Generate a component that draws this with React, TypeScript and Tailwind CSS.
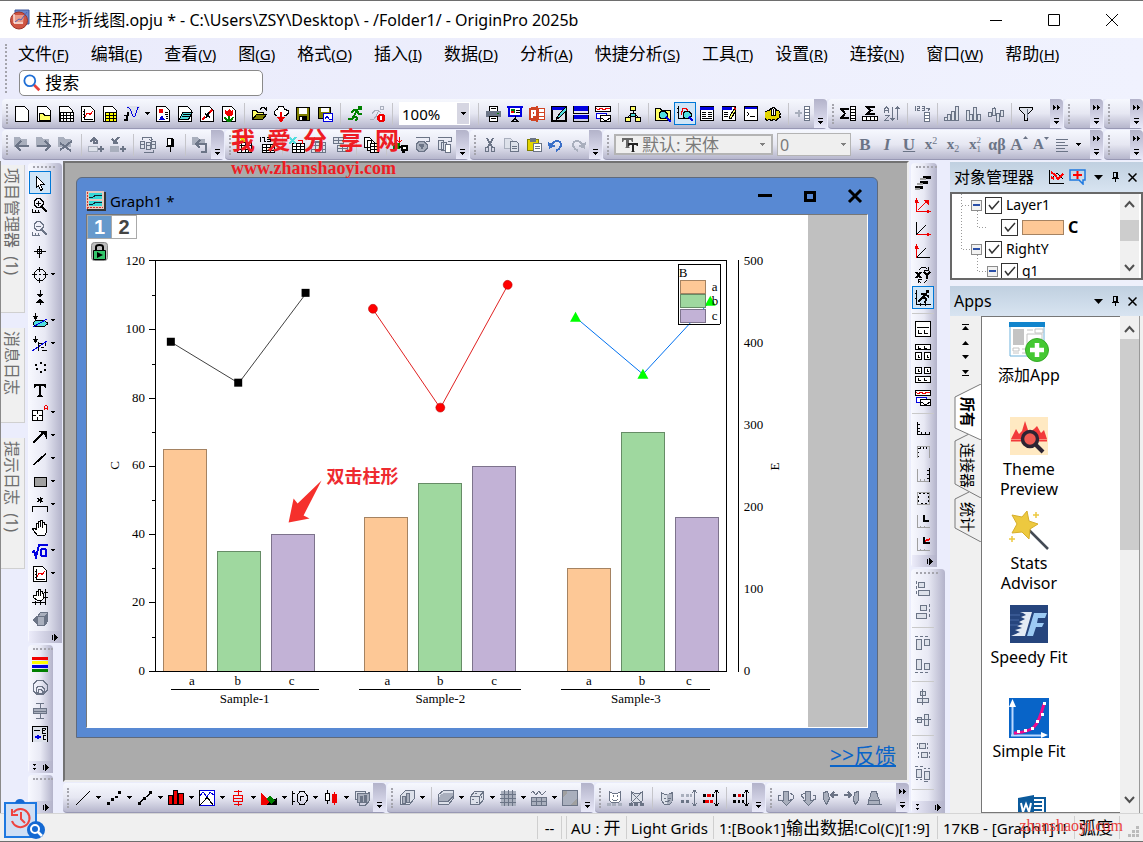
import React from "react";

const COLORS: Record<string, string> = {
  k: "#000000", g: "#6b7486", l: "#a9afbd", s: "#dde1ea", w: "#ffffff", r: "#f00000", m: "#e2d400",
  b: "#0000e0", y: "#ffff66", n: "#008000", c: "#4fdede", o: "#a0a0a0", d: "#808000", p: "#d04423", t: "#3a6fc8", v: "#ffff00",
};

const PAGE = "k/w/M1.5.5h9l4 4v11h-13z";
const GRID = "M.5 5.5h14v10h-14zM.5 8.5h14M.5 12.5h14M4.5 5.5v10M8.5 5.5v10M11.5 5.5v10";
const CUBE = "M1.5 6.5l4-5h9v8l-4 5h-9zM1.5 6.5h9v8M10.5 6.5l4-5";

/* Each entry is "stroke[width]/fill/path" on a 16x16 grid. */
const ICONS: Record<string, string[]> = {
  newProject: [PAGE],
  newFolder: [PAGE, "k/y/M3.5 7.5h4l1 2h6v5h-11z"],
  newWorkbook: [PAGE, "k/w/M2.5 6.5h13v9h-13zM2.5 9.5h13M2.5 12.5h13M5.5 6.5v9M8.5 6.5v9M12.5 6.5v9"],
  newGraph: [PAGE, "k/-/M4.5 3v10h8M4 5.5h-1M4 8.5h-1M4 11.5h-1M7.5 14v-1M10.5 14v-1", "r/-/M5 11l2-4h2l1 2 3-4"],
  newMatrix: [PAGE, "k/v/M3.5 6.5h11v9h-11zM3.5 9.5h11M3.5 12.5h11M7.5 6.5v9M11.5 6.5v9"],
  newFunction: ["-/s/M3 0h13v13h-13z", "b/-/M3 2l1-1 2 2 3 7h2l3-9 1 0", "k2/-/M5 7h-1l-1 7h-3", "k/-/M0 9.5h5"],
  newLayout: [PAGE, "-/r/M4 3h4v4h-4z", "-/b/M4 14l3-5 3 5z", "k/-/M10 6.5h3M10 8.5h3M11 10.5h2M11 12.5h2"],
  newNotes: [PAGE, "k/c/M5.5 6.5h10l-4 7h-9zM5.5 8.5h8M4.5 10.5h8"],
  newWindow: [PAGE, "r2/-/M3 14l3-3M8 9l5-5", "k2/-/M6 8l5 3M10 6l-3 6"],
  newImage: [PAGE, "-/r/M4 4l2 1 2-2 2 2 2-1v4l-2 2h-4l-2-2z", "n2/-/M8 10v5M4 11q1 4 4 4M12 11q-1 4-4 4"],
  open: ["k/y/M1.5 12.5v-8h4l1 2h6v3", "k/d/M1.5 13.5l4-5h10l-4 5z", "k/-/M9 3.5l2-2h2l2 2M15.5 1v4"],
  openCloud: ["k/w/M4 9.5h-1l-2-2v-2l3-2 2-3h4l2 3 3 1v3l-2 2h-2", "r2/-/M8 6v9M5 11l3 4 3-4"],
  save: ["k/d/M1.5 1.5h13v13h-12l-1-1z", "-/w/M4 2h8v6h-8z", "-/k/M4 10h8v5h-8z", "-/w/M5 11h2v3h-2z"],
  saveAs: ["k/d/M1.5 1.5h12v11h-12z", "-/w/M4 2h8v4h-8z", "b/w/M6.5 7.5h9v8h-9z", "b/-/M8 13l2-3 2 3h3"],
  run: ["n2/-/M4 7l3-3h3l-3 6 3 2-1 3M7 10l-2 3H1M10 5l2 3h3", "-/n/M11 0h4v4h-4z"],
  stop: ["l/-/M3 7l3-3h4l-3 6 2 2M7 10l-2 3H1M3 8l3-3M10 5l2 2M11 .5h3v3h-3z", "-/r/M10 8h4l2 2v4l-2 2h-4l-2-2v-4z", "w2/-/M12 10v4"],
  print: ["k/w/M4.5 5V.5h8V5", "-/g/M1 5h15v6H1z", "k/w/M4.5 10.5h8v5h-8zM6 2.5h5M6 12.5h5", "-/n/M12 7h2v1h-2z"],
  slideShow: ["b2/w/M2 1v9h12v-9M0 1h16", "-/n/M4 3h4v4h-4z", "-/r/M4 5h3v2h-3z", "k/-/M9 4.5h4M9 6.5h4M8 10v3M5 15.5l3-3 3 3z"],
  sendToPpt: ["-/p/M0 2l9-2v16l-9-2z", "p/w/M9.5 2.5h6v11h-6zM10 6.5h5M10 10.5h5", "w2/-/M3 12V5h3v4h-3"],
  drawing: ["k2/s/M1 1h14v14h-14z", "-/b/M1 1h14v3h-14z", "k/c/M5 13l4-6 6-6v4l-5 5-5 4z"],
  split: ["-/b/M0 0h16v5h-16zM0 9h16v4h-16z", "k/-/M.5 0v7h15V0M.5 9v6.5h15V9"],
  arrange: ["k/w/M.5.5h15v5H.5z", "r/-/M1 2l2 2 3-2 3 2 3-2 3 1", "b/w/M1.5 7.5h10v5h-10z", "k/w/M5.5 9.5h10v6h-10z", "k/-/M6 12l5 3 4-3"],
  tree: ["k/y/M5.5.5h5v4h-5zM.5 11.5h5v4h-5zM10.5 11.5h5v4h-5z", "k/-/M8 5v3M3 11l5-4 5 4", "k/c/M5.5 7.5h5v3h-5z"],
  findFolder: ["k/y/M.5 2.5h5l1 2h9v10H.5z", "k/c/M6 5.5h4l2 2v3l-2 2H6l-2-2v-3z", "b2/-/M11 11l5 5"],
  findGraph: ["k/-/M1.5 0v12h6M0 2.5h2M0 6.5h2M4.5 13v-1", "r/-/M4 9l2-7h3l2 3", "k/c/M8 5.5h4l2 2v3l-2 2H8l-2-2v-3z", "b2/-/M12 11l4 4"],
  results: ["k/w/M1.5.5h13v14h-13z", "-/b/M1 1h14v3h-14z", "k/-/M3 6.5h4M9 6.5h4M3 8.5h4M9 8.5h4M3 10.5h4M9 10.5h4M3 12.5h10"],
  editCode: ["k/w/M1.5.5h13v14h-13z", "-/b/M1 1h10v3h-10z", "k/-/M3 6.5h4M3 8.5h4M3 10.5h4", "k/y/M8 12l5-9 2 1-5 9z", "r2/-/M13 2l2 1"],
  command: ["k/w/M1.5.5h13v14h-13z", "-/b/M2 1h12v2h-12z", "k/-/M4 6l2 2-2 2M7 10.5h5"],
  gear: ["k/m/M2.5 4.5h2l1-2h5l1 2h2l2 3-1 2 1 2-3 1-1 2-3-1-2 1-2-1-3 1-1-2-3-1 1-2-1-2z", "k/w/M6.5 3.5l1-2h2l1 2v6h-4zM8.5 3v6"],
  addColumn: ["l2/-/M0 7h7M3.5 3.5v7", "g/w/M9.5.5h5v14h-5zM10 3.5h4M10 6.5h4M10 9.5h4M10 12.5h4"],
  stats: ["k2/-/M8 4V3H1l4 4.5L1 12h7v-1", "k/w/M10.5.5h5v14h-5zM11 3.5h4M11 6.5h4M11 9.5h4M11 12.5h4"],
  rowStats: ["k2/-/M12 2V1H5l4 3.5L5 8h7V7", "k/w/M.5 10.5h15v4H.5zM4.5 11v3M8.5 11v3M12.5 11v3"],
  sort: ["g/-/M.5 7V3l2-2 2 2v4M1 4.5h3M1 9.5h4l-4 5h4M8.5 1v13M6.5 12l2 2 2-2M13.5 14V1M11.5 3l2-2 2 2"],
  insertNumbers: ["g/-/M1.5 0v5M3 .5h2v2h-2v2h3M8 .5h2v4h-2M8 2.5h2M12 2.5h4l-2 2", "g/w/M10.5 6.5h5v9h-5zM11 9.5h4M11 12.5h4"],
  barsUp: ["g/s/M.5 11.5h3v3h-3zM3.5 8.5h3v6h-3zM7.5 5.5h3v9h-3zM11.5.5h3v14h-3z"],
  barsHist: ["g/s/M.5 4.5h3v10h-3zM3.5 8.5h3v6h-3zM7.5 1.5h3v13h-3zM11.5 8.5h3v6h-3z"],
  barsDiff: ["g/s/M.5 6.5h3v4h-3zM4.5 2.5h3v7h-3zM8.5 7.5h3v8h-3zM12.5 4.5h3v6h-3zM6.5.5v2"],
  filter: ["k/s/M1.5 1.5h13v2l-5 5v6h-3v-6l-5-5z", "g/-/M9 3v9"],
  back: ["-/l/M0 0h6l1 2h6v8H0z", "g2/-/M15 9H2M7 4L2 9l5 5"],
  forward: ["-/l/M0 0h6l1 2h6v8H0z", "g2/-/M1 9h13M9 4l5 5-5 5"],
  closeFolder: ["-/l/M0 0h6l1 2h6v8H0z", "g2/-/M2 13L14 4M2 6l11 8"],
  moveUp: ["g2/-/M2 5l4-4 4 4M6 1v5h4", "l/s/M.5 9.5h9v5h-9z", "g2/-/M10 12h6M13 9v6"],
  moveDown: ["g2/-/M2 2l4 4M3 6h5M9 0L6 3v3", "-/l/M0 9h9v6H0z", "g2/-/M10 12h6M13 9v6"],
  windows: ["g/-/M2 2.5V.5h9v2M4 15.5h9v-3M9 2l2 2 2-2", "g/s/M.5 4.5h4v7h-4zM6.5 5.5h4v7h-4zM11.5 4.5h4v7h-4zM0 7.5h4M6 8.5h4M11 7.5h4"],
  pin: ["k/w/M5.5 1.5h5v7h-5z", "k/k/M9 2h2v7H9zM4 9.5h8M8 10v5"],
  undoFolder: ["-/l/M0 0h6l1 2h6v6H0z", "g2/-/M9 15h5V7H5M8 3L4 7l4 4"],
  gridNew: ["k/w/" + GRID, "m2/-/M3 0l5 5M8 0L3 5"],
  grid123: ["k/-/M1.5 0v5M3 .5h2v4h2M8 .5h3v4H8M8 2.5h3", "k/w/M3.5 7.5h12v8h-12zM3.5 10.5h12M3.5 13.5h12M7.5 7.5v8M11.5 7.5v8"],
  gridExcel: ["k/w/M3.5 6.5h12v9h-12zM3.5 9.5h12M3.5 12.5h12M7.5 6.5v9M11.5 6.5v9", "c2/-/M0 0l7 7M7 0L0 7", "r/-/M9 3.5h4v3"],
  gridDim: ["g/s/" + GRID, "g/-/M3 0v4h8"],
  gridDim2: ["g/s/M.5.5h10v6H.5zM.5 3.5h10M5.5.5v6M4.5 8.5h10v6h-10zM4.5 11.5h10M9.5 8.5v6"],
  copies: ["k/w/M1.5.5h5l2 2v8h-7zM4.5 3.5h5l2 2v8h-7z", "k/w/M7.5 6.5h8v9h-8zM7.5 9.5h8M7.5 12.5h8M11.5 6.5v9"],
  plug: ["n2/n/M1 7h5v4H1z", "k2/w/M9 9h5v4H9zM6 10h3M9 15h3", "r/-/M6.5 0v5M4 3l2.5 2L9 3"],
  disc: ["g/-/M1 .5h13v4M11 4.5h4", "g/l/M4 4.5h5l3 3v4l-3 3H4l-3-3v-4z", "g/g/M4 7h5l-2 5z"],
  copyPages: ["g/-/M1 .5h13v4M11 4.5h4", "g/s/M1.5 3.5h5v9h-5zM4.5 5.5h5v8h-5z", "g/w/M8.5 7.5h5v8h-5z"],
  cut: ["g/-/M4.5 1l5 9M5.5 1l5 9M11.5 1l-5 9M10.5 1l-5 9", "g/-/M3.5 10.5h3v4h-3zM9.5 10.5h3v4h-3z"],
  copy: ["l/s/M.5 1.5h6l2 2v8h-8z", "g/s/M6.5 4.5h6l2 2v8h-8zM8 9.5h5M8 11.5h5"],
  paste: ["d/m/M1.5 2.5h11v11h-11z", "-/g/M4 1h6v4H4z", "g/w/M7.5 6.5h8v8h-8zM9 9.5h5M9 11.5h5"],
  undo: ["t2/-/M4 7q4-5 8-2q3 5-4 9", "-/t/M0 5l8 4-7 3z"],
  redo: ["l2/-/M12 7q-4-5-8-2q-3 5 4 9", "-/l/M16 5l-8 4 7 3z"],
  align: ["g/-/M1 2.5h12M1 5.5h9M1 8.5h12M1 11.5h9M1 14.5h12"],
  pointer: ["k/w/M4.5 1.5l8 8h-4l2 5-2 1-2-5-2 2v-11z"],
  zoomIn: ["k/-/M5 .5h3l3 3v3l-3 3H5l-3-3v-3zM4 5h5M6.5 2.5v5M.5 11v4M0 14.5h8M3.5 12v3M6.5 12v3", "k2/-/M10 9l5 5"],
  zoomOut: ["g/-/M5 .5h3l3 3v3l-3 3H5l-3-3v-3zM4 5h5M.5 11v4M0 14.5h8M3.5 12v3M6.5 12v3", "g2/-/M10 9l5 5"],
  reader: ["k/-/M2 7.500h12M7.500 2v12M5.500 5.500h4v4h-4z"],
  target: ["k/-/M5.500 2.500h5l3 3v5l-3 3h-5l-3-3v-5zM0 7.500h5M11 7.500h5M7.500 0v5M7.500 11v5M7 7.500h2"],
  selector: ["k/k/M8 0v5M5 4h6l-3 3zM8 15v-4M5 12h6l-3-3z"],
  region: ["k/c/M4 7.5h8l3 2v2l-3 2H4l-3-2v-2z", "b/-/M1 14L15 6", "k/k/M3.5 0v4M1 3h5l-2.5 3z"],
  maskLine: ["b/-/M0 15L15 5", "k/-/M6.5 6v9M6 7.5h4M9 11.5h3M13.5 7v3M10 14.500h5", "k/k/M3.5 0v4M1 3h5l-2.5 3z"],
  scatter: ["-/k/M3 5h2v2H3zM8 3h2v2H8zM12 5h2v2h-2zM4 9h2v2H4zM8 12h2v2H8zM12 10h2v2h-2z"],
  text: ["-/k/M2 2h12v4h-1l-1-2H9v9l2 1v1H5v-1l2-1V4H4L3 6H2z"],
  annotate: ["k/w/M.5 5.5h10v10H.5zM.5 10.5h3M7 10.5h3M5.5 5.5v3M5.5 12v3", "r/-/M12.5 5V1.5L14 .5l1.500 1V5M12.500 3.500h3"],
  arrow: ["k2/-/M1 15L11 5", "-/k/M6 3h9v9l-2-4-3-3z"],
  line: ["k/-/M1 14L14 2M2 14L14 3"],
  rect: ["k/o/M2.500 3.500h12v9h-12z"],
  bracket: ["k/-/M.500 15V9.500h15V15", "k/-/M8 0v6M5 1l6 4M5 5l6-4"],
  hand: ["k/w/M5.5 15.5l-4-5-1-2h2l2 1v-6h2v-2h2v-1h2v2h2v2h2v8l-2 3zM6.500 3v5M8.500 2v5M10.500 3v5"],
  formula: ["b2/-/M0 9l2-1 2 6L7 2h9M14 6h-4l-1 1v5l1 1h4M14 6v8"],
  handAxis: ["k/w/M5.500 11.500l-4-3v-2h3v-4h2v-2h2v2h2v2h1v5l-2 2zM6.500 3v4M8.500 3v4", "k/-/M0 13.500h13M13.500 0v16M3.500 12v4M8.500 12v4M12 3.500h4M12 8.500h4"],
  box3d: ["g/l/M5.500 4.500l3-4h7v9l-3 4h-7z", "-/g/M12 4l3-3v9l-3 3z", "g/-/M5.500 4.500h7v9", "-/g/M0 8l5-4v8z"],
  palette: ["-/r/M0 0h16v3H0z", "-/v/M0 4h16v3H0z", "-/b/M0 8h16v3H0z", "-/n/M0 12h16v3H0z"],
  circles: ["g/-/M5 .500h6l4 4v6l-4 4H5l-4-4v-6zM6 6.500h4l2 2v3l-2 2H6l-2-2v-3zM7 9.500h2l1 1v3H6v-3z"],
  boxGray: ["g/l/M1.500 5.500h13v5h-13zM1.500 8h13M8 0v5M8 11v4M4 .500h8M4 15.500h8"],
  legend: ["k/s/M.500 15.500V.500h15v15", "k/-/M2 4.500h6M10.500 2v5h3M10 4.500h3M10.500 2.500h3M13.500 3v1M14 9.500h-3v4h3", "b2/-/M3 11h6M6 9v4"],
  layers: ["k3/-/M8 2h8M5 7h8M0 12h8", "o2/-/M5 4h6M2 9h6M0 14h5"],
  axesRed: ["r/r/M1.500 14V2M0 4l1.500-3L3 4zM12 12l3 1.500L12 15zM2 13.500h12M3 12l9-9M9 2h4v4z"],
  axesX: ["k/-/M1.500 14V1M2 13l9-9", "r/r/M2 13.500h12M12 12l3 1.500L12 15z"],
  axesY: ["k/-/M2 13.500h13M2 13l9-9", "r/r/M1.500 14V2M0 4l1.500-3L3 4z"],
  swapXY: ["k2/-/M1 5l5 6M6 5l-5 6M9 5l3 3 3-3M12 8v4", "k/-/M4 3l3-3h3l2 2M13 0v3H9M12 13l-3 3H6l-2-2M3 16v-4h4"],
  runGraph: ["k/-/M1.500 0v14.500H16M0 3.500h2M0 8.500h2M5.500 13v3M10.500 13v3", "k2/-/M11 3L8 7l3 2-1 4M8 7l-5 5M6 4h4l4 3", "-/k/M11 0h3v3h-3z"],
  layoutOne: ["k/w/M.500.500h15v15H.500z", "k/-/M2 6.500h12M3.500 9v3.500H7M9.500 9v3.500H13"],
  layoutTwo: ["k/w/M.500.500h15v5H.500zM.500 8.500h6v7h-6zM9.500 8.500h6v7h-6z", "k/-/M3.500 2v2H6M9.500 2v2H12M3 11v2h2M12 11v2h2"],
  layoutFour: ["k/w/M.500.500h6v6h-6zM9.500.500h6v6h-6zM.500 9.500h15v6H.500z", "k/-/M3 2v2h2M12 2v2h2M3.500 11v2H6M9.500 11v2H12"],
  cornerL: ["k/-/M2.500 1v12.500H15M2 3.500h3M2 7.500h3M2 10.500h3M6.500 14v-3M10.500 14v-3M14.500 14v-3"],
  cornerTop: ["o/-/M2.500 14V2.500h12V14", "k/-/M3 4h2M3 8h1M3 12h1M5.500 3v2M8.500 3v2M11.500 3v2"],
  cornerRight: ["o/-/M2.500 2v12.500H14M5.500 12v2M9.500 12v2", "k/-/M14.500 1v14M12 3.500h3M12 7.500h3M12 11.500h3"],
  cornerAll: ["o/-/M2.500 2.500h12v12h-12z", "k/-/M4 3.500h2M8 3.500h2M12 3.500h2M13.500 6v2M13.500 10v2M3.500 6v2M3.500 10v2M6 13.500h2M10 13.500h2"],
  inset: ["o/-/M2.500 2v12.500H15M5.500 13v2M9.500 13v2", "k2/-/M9 2v6h5"],
  insetData: ["o/-/M2.500 2v12.500H15M5.500 13v2M9.500 13v2", "k2/-/M9 1v6h6", "r/-/M10 6l2-3 1 2 2-3"],
  alignLeft: ["g/s/M3.500 1.500h6v5h-6zM3.500 9.500h11v5h-11z", "g/-/M1.500 0v3M1.500 5v3M1.500 10v3"],
  alignRight: ["g/s/M5.500 1.500h6v5h-6zM1.500 9.500h10v5h-10z", "g/-/M14.500 0v3M14.500 5v3M14.500 10v3"],
  alignTop: ["g/s/M1.500 4.500h5v10h-5zM9.500 4.500h5v6h-5z", "g/-/M0 1.500h3M5 1.500h3M10 1.500h3"],
  alignBottom: ["g/s/M1.500 1.500h5v10h-5zM9.500 5.500h5v6h-5z", "g/-/M0 14.500h3M5 14.500h3M10 14.500h3"],
  centerV: ["g/s/M5.500 2.500h5v4h-5zM2.500 9.500h11v4h-11z", "g/-/M7.500 0v16"],
  centerH: ["g/s/M2.500 5.500h4v5h-4zM9.500 2.500h4v11h-4z", "g/-/M0 7.500h16"],
  distributeV: ["g/s/M4.500.500h6v5h-6zM6.500 9.500h6v5h-6z", "g/-/M2.500 0v2M2.500 4v2M12.500 0v2M12.500 4v2M3.500 9v2M3.500 13v2M14.500 9v2M14.500 13v2"],
  distributeH: ["g/s/M1.500 3.500h5v8h-5zM9.500 5.500h5v8h-5z", "g/-/M0 .500h3M5 .500h3M9 2.500h2M13 2.500h2M1 13.500h2M5 13.500h2M9 15.500h4"],
  plotLine: ["k/-/M1 15L15 1"],
  plotDots: ["-/k/M1 12h3v3H1zM5 8h3v3H5zM9 6h3v2H9zM12 1h3v3h-3z"],
  plotLineDots: ["k/-/M2 13L14 3", "-/k/M1 12h3v3H1zM6 7h3v3H6zM12 1h3v3h-3z"],
  plotBars: ["k/r/M.500 5.500h4v9h-4zM5.500.500h4v14h-4zM10.500 3.500h5v11h-5z"],
  plotDouble: ["b/w/M.500.500h15v15H.500z", "b/-/M1 6l3-4 4 5 3-5 4 3", "k/-/M1 15l5-5 2-3 6 8M.500 0v16h15"],
  plotBox: ["r/-/M3.500 5.500h9v6h-9zM8 0v5M8 11v5M4 1.500h8M4 14.500h8M3 8.500h10"],
  plotArea: ["-/k/M0 15l8-8 3 3 5-2v7z", "-/r/M0 3l9 9-4 3H0z", "-/n/M5 9l4-4 5 6-4 3z"],
  plotPolar: ["k/-/M.500 1v14M.500 3.500h2M.500 11.500h2M8 1.500h4l3 4v5l-3 4H8l-3-4v-5zM8.500 11V6M9 6.500h3"],
  plotStock: ["k/w/M2.500 3.500h4v7h-4zM4.500 0v3M4.500 11v3", "r/r/M9.500 4.500h4v8h-4zM11.500 2v13"],
  plotTemplates: ["g/s/M1.500 1.500h10v8h-10z", "g/l/M3.500 3.500h10l2-1v8l-2 2h-10z", "g/g/M6 6h2v6H6zM10 5h2v7h-2z", "g/-/M5.500 13v2h6l3-3"],
  cubeBars: ["g/s/M1.500 5.500l5-5h9v8l-5 6h-9z", "g/l/M3.500 6.500h3v7h-3zM7.500 3.500h3v9h-3z"],
  cubeFlat: ["g/s/M.500 4.500l5-4h10v8l-5 6H.500z", "-/l/M3 4.500l4-2h8v6l-5 3H1v-4z", "g/-/M1 11.500h9l5-5"],
  cubeDice: ["g/s/" + CUBE, "g/-/M3 9h2M7 12h2M12 6v2M6 3h2"],
  gridFill: ["l/l/M1 1h14v14H1z", "g/-/M4.500 0v16M8.500 0v16M12.500 0v16M0 4.500h16M0 8.500h16M0 12.500h16"],
  waveGrid: ["g/-/M0 3l2-2 3 4 3-4 3 4 4-4", "g/l/M.500 7.500h15v8H.500zM.500 11.500h15M5.500 8v8M10.500 8v8"],
  square: ["g/l/M.500.500h15v15H.500z", "-/o/M1 1h4v3l-4 3zM8 15l7-6v6z"],
  maskA: ["g/w/M2.500 1.500l3 2h5l3-2v9l-2 2h-7l-2-2z", "g/-/M6 5v2M10 5v2M5 9.500l2 1h2l2-1", "-/l/M0 13h4v3H0zM5 13h4v3H5zM11 13h4v3h-4z"],
  maskB: ["g/s/M2.500 1.500l3 2h5l3-2v9l-2 2h-7l-2-2z", "g/-/M2 2l11 11M13 2L2 13", "-/g/M0 13h4v3H0zM5 13h4v3H5zM11 13h4v3h-4z"],
  mask: ["g/s/M2.500 2.500l3 2h4l4-2v8l-3 4h-5l-3-4z", "-/l/M8 4h5v7l-3 3H8z", "g/-/M5 8h2M9 8h3M6 11l2 1 3-2"],
  maskGray: ["-/l/M0 4h3v3H0zM5 4h3v3H5zM9 4h2v3H9z", "-/g/M0 10h3v3H0zM5 10h3v3H5z", "g/-/M13.500 1v14M11 3l2.500-3L16 3M11 13l2.500 3 2.500-3"],
  maskRed: ["-/k/M0 4h3v3H0zM9 4h2v3H9zM0 10h3v3H0z", "-/r/M4 4h4v3H4zM2 10h4v3H2zM7 10h3v3H7z", "k/-/M13.500 1v14M11 3l2.500-3L16 3M11 13l2.500 3 2.500-3"],
  maskBlack: ["-/k/M0 4h3v3H0zM9 4h2v3H9zM0 10h3v3H0zM5 10h2v3H5zM9 10h2v3H9z", "-/r/M5 4h3v3H5z", "k/-/M13.500 1v14M11 3l2.500-3L16 3M11 13l2.500 3 2.500-3"],
  rotateL: ["g/l/M5.500 1.500h5v9h3l-5 5-5-5h2z", "g/-/M3 5.500H.500v5h3M12 3l3 2v4l-3 1"],
  rotateR: ["g/l/M5.500 1.500h5v9h3l-5 5-5-5h2z", "g/-/M5 3L1 5l3 4M13 5.500h2v4h-2"],
  tiltL: ["g/l/M1.500 2.500l4-1 2 7-3 6-3-5z", "g2/-/M16 5H9M12 2L9 5l3 3"],
  tiltR: ["g/l/M10.500 2.500l4-1v9l-3 4-2-4z", "g2/-/M0 5h7M4 2l3 3-3 3"],
  bell: ["g/l/M5.500 1.500h5l1 4 2 5v4h-11v-4l2-5zM2 10.500h12M.500 14.500h15"],
};

function Glyph({ name }: { name: string }) {
  return (
    <svg width="16" height="16" viewBox="0 0 16 16" className="shrink-0" shapeRendering="crispEdges" aria-hidden="true">
      {(ICONS[name] || []).map((shape, i) => {
        const [stroke, fill, d] = shape.split("/");
        return (
          <path
            key={i}
            d={d}
            stroke={stroke === "-" ? "none" : COLORS[stroke[0]]}
            strokeWidth={stroke.slice(1) || "1"}
            fill={fill === "-" ? "none" : COLORS[fill]}
          />
        );
      })}
    </svg>
  );
}

function Caret({ className = "text-black" }: { className?: string }) {
  return (
    <svg width="5" height="3" viewBox="0 0 5 3" fill="currentColor" className={className} shapeRendering="crispEdges" aria-hidden="true">
      <path d="M0 0h5v1H4v1H3v1H2V2H1V1H0z" />
    </svg>
  );
}

type BarProps = { items?: string; end?: boolean; more?: boolean; className?: string; children?: React.ReactNode };

function ToolItems({ items, vertical = false }: { items: string; vertical?: boolean }) {
  return (
    <>
      {items.split(" ").map((item, i) => {
        if (item === "|") {
          return vertical ? (
            <span key={i} className="flex h-2 w-[22px] shrink-0 items-center"><span className="h-px w-full bg-[#c9c9c9]" /></span>
          ) : (
            <span key={i} className="flex w-2 shrink-0 items-center justify-center"><span className="h-[22px] w-px bg-[#c5c5ca]" /></span>
          );
        }
        const name = item.replace(/[*>]/g, "");
        const active = item.includes("*");
        const menu = item.includes(">");
        return (
          <span key={i} className={vertical ? "flex h-[23px] shrink-0 items-center" : "flex shrink-0 items-center"}>
            <button
              type="button"
              aria-label={name}
              aria-pressed={active}
              className={
                active
                  ? "flex h-[23px] w-[22px] items-center justify-center border border-[#0078d7] bg-[#d0e5f7]"
                  : "flex h-[23px] w-[22px] items-center justify-center"
              }
            >
              <Glyph name={name} />
            </button>
            {menu && (
              <button type="button" aria-label={name + " options"} className={vertical ? "flex h-[23px] w-1 items-center justify-center" : "flex h-[23px] w-[9px] items-center justify-center"}>
                <Caret />
              </button>
            )}
          </span>
        );
      })}
    </>
  );
}

function EndCap({ more }: { more?: boolean }) {
  return (
    <button
      type="button"
      aria-label="Toolbar options"
      className="flex w-[13px] shrink-0 flex-col items-center justify-between rounded-tr bg-linear-to-b from-[#b3b3ca] to-[#e8e8f8] pt-1.5 pb-1"
    >
      <svg width="8" height="5" viewBox="0 0 8 5" shapeRendering="crispEdges" aria-hidden="true">
        {more && <path d="M0 0l3 2.500L0 5zM4 0l3 2.500L4 5z" fill="#000" />}
      </svg>
      <svg width="5" height="6" viewBox="0 0 5 6" shapeRendering="crispEdges" aria-hidden="true">
        <path d="M0 0h5v1H0zM0 3h5v1H4v1H3v1H2V5H1V4H0z" fill="#000" />
      </svg>
    </button>
  );
}

function Bar({ items, end = true, more, className = "", children }: BarProps) {
  return (
    <div role="toolbar" className={"flex h-[30px] shrink-0 rounded-l rounded-br border-b border-[#9898b4] bg-linear-to-b from-[#f6f8fe] via-[#e6e7f2] to-[#b6b6cc] " + className}>
      <span className="flex w-[9px] shrink-0 items-center justify-center">
        <span className="h-5 border-l-2 border-dotted border-[#a4a4ac]" />
      </span>
      {items && <ToolItems items={items} />}
      {children}
      <span className="flex-1" />
      {end && <EndCap more={more} />}
    </div>
  );
}

function SideBar({ items, className = "", more }: { items?: string; className?: string; more?: boolean }) {
  return (
    <div role="toolbar" className={"flex flex-col rounded bg-linear-to-r from-[#f8f9ff] via-[#e8e9f4] to-[#b3b3ca] pl-px " + className}>
      <span className="flex h-2 shrink-0 items-center pl-1">
        <span className="w-[22px] border-t-2 border-dotted border-[#a4a4ac]" />
      </span>
      {items && <ToolItems items={items} vertical />}
      <span className="flex-1" />
      <button type="button" aria-label="Toolbar options" className="flex h-3 shrink-0 items-center justify-between bg-linear-to-r from-[#ececfa] to-[#b3b3ca] pr-1 pl-1">
        <svg width="3" height="6" viewBox="0 0 3 6" shapeRendering="crispEdges" aria-hidden="true">
          {more && <path d="M0 0h3v1H2v1H1V1H0zM0 4h3v1H2v1H1V5H0z" fill="#000" />}
        </svg>
        <svg width="6" height="7" viewBox="0 0 6 7" shapeRendering="crispEdges" aria-hidden="true">
          <path d="M0 1h1v5H0zM2 0v7l4-3.500z" fill="#000" />
        </svg>
      </button>
    </div>
  );
}

function TitleBar() {
  return (
    <header className="flex h-[38px] shrink-0 items-center border-t border-[#6e6e6e] bg-white pr-0.5 pl-[9px]">
      <svg width="22" height="22" viewBox="0 0 22 22" aria-hidden="true">
        <path d="M6 1h14v14H6z" fill="#6b87c8" stroke="#41599c" />
        <circle cx="10" cy="11.500" r="8.500" fill="#cf5543" stroke="#9d3126" />
        <path d="M4 6h11l-1 9H5z" fill="#e99a88" />
        <path d="M6 13l4-3 2 1 6-8" stroke="#4f61b7" fill="none" />
        <path d="M5 5v9h9" stroke="#fff" fill="none" />
      </svg>
      <h1 className="ml-[5px] text-base">柱形+折线图.opju * - C:\Users\ZSY\Desktop\ - /Folder1/ - OriginPro 2025b</h1>
      <span className="flex-1" />
      {[
        ["Minimize", "M2 8.500h12"],
        ["Maximize", "M2.500 2.500h11v11h-11z"],
        ["Close", "M2 2l12 12M14 2L2 14"],
      ].map(([label, d]) => (
        <button key={label} type="button" aria-label={label} className="flex h-full w-[58px] items-center justify-center">
          <svg width="16" height="16" viewBox="0 0 16 16" fill="none" stroke="#000"><path d={d} /></svg>
        </button>
      ))}
    </header>
  );
}

const MENUS = [
  ["文件", "F"], ["编辑", "E"], ["查看", "V"], ["图", "G"], ["格式", "O"], ["插入", "I"], ["数据", "D"],
  ["分析", "A"], ["快捷分析", "S"], ["工具", "T"], ["设置", "R"], ["连接", "N"], ["窗口", "W"], ["帮助", "H"],
];

function MenuArea() {
  return (
    <div className="flex h-[61px] shrink-0 bg-linear-to-r from-[#eaebfb] to-[#f0f2fe]">
      <span className="my-1.5 ml-[5px] border-l-2 border-dotted border-[#a4a4ac]" />
      <div className="flex flex-col">
        <nav className="flex h-8 items-center gap-[22px] pl-[11px] text-[17px] whitespace-nowrap">
          {MENUS.map(([label, key]) => (
            <button key={key} type="button">
              {label}<span className="text-[15px]">(<u>{key}</u>)</span>
            </button>
          ))}
        </nav>
        <label className="ml-3 flex h-[26px] w-[244px] items-center rounded-[5px] border border-[#8a8a8a] bg-white pl-[3px]">
          <svg width="20" height="20" viewBox="0 0 20 20" fill="none" aria-hidden="true">
            <path d="M12 12l6 6" stroke="#e8413b" strokeWidth="3" />
            <circle cx="7.500" cy="7.500" r="6" stroke="#1f6fd6" strokeWidth="2" fill="#fff" />
          </svg>
          <input aria-label="搜索" placeholder="搜索" className="ml-1 w-full bg-transparent text-[17px] outline-none placeholder:text-black" />
        </label>
      </div>
    </div>
  );
}

const FORMAT_BUTTONS: [string, React.ReactNode][] = [
  ["Bold", <b>B</b>],
  ["Italic", <b className="italic">I</b>],
  ["Underline", <b className="underline">U</b>],
  ["Superscript", <span className="text-[15px]"><b>x</b><sup className="text-[10px]">2</sup></span>],
  ["Subscript", <span className="text-[15px]"><b>x</b><sub className="text-[10px]">2</sub></span>],
  ["Both scripts", <span className="flex items-center text-[15px]"><b>x</b><span className="flex flex-col text-[9px] leading-[9px]"><span>2</span><span>1</span></span></span>],
  ["Greek", <b className="text-base">αβ</b>],
  [
    "Increase font",
    <span className="flex">
      <b>A</b>
      <svg width="5" height="3" viewBox="0 0 5 3" fill="currentColor"><path d="M0 3h5L2.500 0z" /></svg>
    </span>,
  ],
  [
    "Decrease font",
    <span className="flex text-[15px]">
      <b>A</b>
      <svg width="5" height="3" viewBox="0 0 5 3" fill="currentColor"><path d="M0 0h5L2.500 3z" /></svg>
    </span>,
  ],
];

function TopToolbars() {
  return (
    <div className="flex shrink-0 flex-col gap-px bg-[#eaecfb] pl-0.5">
      <div className="flex gap-px">
        <Bar items="newProject newFolder newWorkbook newGraph newMatrix newFunction> newLayout newNotes newWindow newImage | open openCloud save saveAs | run stop |" className="flex-none">
          <label className="my-[3px] ml-[3px] flex w-[71px] border border-white bg-white">
            <select aria-label="Zoom" className="min-w-0 flex-1 appearance-none pl-0.5 text-[15px] outline-none">
              <option>100%</option>
            </select>
            <span className="flex w-3 items-center justify-center bg-[#d6d6e2]"><Caret /></span>
          </label>
          <span className="w-1" />
          <ToolItems items="| print slideShow sendToPpt drawing split arrange | tree | findFolder findGraph* results editCode command gear | addColumn" />
        </Bar>
        <Bar items="stats rowStats sort | insertNumbers | barsUp barsHist barsDiff | filter" more className="flex-1" />
        <Bar more className="w-[39px]" />
        <Bar more className="w-[39px]" />
      </div>
      <div className="flex gap-px">
        <Bar items="back forward closeFolder | moveUp moveDown | windows pin | undoFolder" />
        <Bar items="gridNew grid123 | gridExcel gridDim gridDim2 | copies | plug disc copyPages" />
        <Bar items="cut copy paste undo redo" />
        <Bar more className="flex-1">
          <label className="my-1 ml-0.5 flex w-[159px] items-center border-2 border-[#b4b4b4] bg-[#efefef] pl-1.5 text-[17px] text-[#7a7a7a]">
            <svg width="16" height="16" viewBox="0 0 16 16" aria-hidden="true">
              <path d="M0 1h11v4h-1l-1-2H7v7l1 1H3l1-1V3H2L1 5H0z" fill="#666" />
              <path d="M6 6h10v3h-1l-1-1h-2v6l1 1H9l1-1V8H8L7 9H6z" fill="#222" />
            </svg>
            <select aria-label="Font" className="min-w-0 flex-1 appearance-none bg-transparent pl-1 outline-none">
              <option>默认: 宋体</option>
            </select>
            <Caret className="mr-1.5 text-[#808080]" />
          </label>
          <label className="my-[3px] mr-[3px] ml-1 flex w-[74px] items-center border border-[#b4b4b4] bg-[#efefef] text-base text-[#7a7a7a]">
            <select aria-label="Font size" className="min-w-0 flex-1 appearance-none bg-transparent pl-0.5 outline-none">
              <option>0</option>
            </select>
            <Caret className="mr-1 text-[#808080]" />
          </label>
          {FORMAT_BUTTONS.map(([label, node]) => (
            <button key={label} type="button" aria-label={label} className="flex w-[22px] items-center justify-center font-['Liberation_Serif',serif] text-[17px] leading-none text-[#6b7486]">
              {node}
            </button>
          ))}
          <ToolItems items="align>" />
        </Bar>
        <Bar more className="w-[39px]" />
      </div>
    </div>
  );
}

function LeftDock() {
  return (
    <aside className="flex shrink-0 bg-[#ebedfc]">
      <div className="flex w-[28px] flex-col gap-[15px] border-l border-[#8a8a8a] pt-1 text-base text-[#6e6e6e]">
        {[
          ["项目管理器  (1)", "h-[148px]"],
          ["消息日志", "h-[95px]"],
          ["提示日志  (1)", "h-[131px]"],
        ].map(([label, size]) => (
          <button
            key={label}
            type="button"
            className={"w-6 border-r border-b border-[#d0d0d0] bg-[#f0f0f0] pt-[3px] text-left leading-6 whitespace-pre [text-orientation:sideways] [writing-mode:vertical-rl] " + size}
          >
            {label}
          </button>
        ))}
      </div>
      <div className="flex w-[35px] flex-col gap-0.5 pt-0.5">
        <SideBar
          className="w-[34px]"
          items="pointer* zoomIn zoomOut reader target> selector region> maskLine> scatter text annotate> arrow> line> rect> bracket> hand formula> newGraph> handAxis box3d"
        />
        <SideBar className="h-32 w-[25px]" more items="palette circles boxGray legend" />
        <SideBar className="w-[25px] flex-1" more />
      </div>
    </aside>
  );
}

const CATEGORIES = ["a", "b", "c"];
const FILLS = ["#fdc896", "#9fd89f", "#c2b2d6"];
const EDGES = ["#a58362", "#668c66", "#7d738c"];
const GROUPS = [
  { name: "Sample-1", x: 185, labels: [192, 238, 292], mid: 245, bars: [65, 35, 40], line: [400, 350, 460] },
  { name: "Sample-2", x: 387, labels: [388, 441, 495], mid: 441, bars: [45, 55, 60], line: [440, 320, 470] },
  { name: "Sample-3", x: 590, labels: [590, 643, 690], mid: 637, bars: [30, 70, 45], line: [431, 361, 450] },
];
const yLeft = (v: number) => 672 - Math.round((v * 411) / 120);
const yRight = (v: number) => 672 - Math.round((v * 411) / 500);

function Chart() {
  return (
    <svg viewBox="87 215 721 513" preserveAspectRatio="xMinYMin meet" className="h-full w-full font-['Liberation_Serif',serif] text-[13px]" role="img" aria-label="柱形+折线图">
      <g shapeRendering="crispEdges" stroke="#000" fill="none">
        {GROUPS.map((group) =>
          group.bars.map((v, i) => (
            <rect key={group.name + i} x={group.x - 21.5 + i * 54} y={yLeft(v) + 0.5} width="43" height={672 - yLeft(v)} fill={FILLS[i]} stroke={EDGES[i]} />
          )),
        )}
        <path d="M155.500 260.500H727.500V672.500H155.500z" />
        <path d="M739.500 260V673" />
        {Array.from({ length: 13 }, (_, i) => (
          <path key={i} d={"M155 " + (yLeft(i * 10) + (i === 12 ? -0.5 : 0.5)) + (i % 2 ? "h-3" : "h-6")} />
        ))}
        <path d="M171 690.500H319M360 690.500H522M562 690.500H711" />
      </g>
      {[0, 20, 40, 60, 80, 100, 120].map((v) => (
        <text key={v} x="145" y={yLeft(v) + 4} textAnchor="end">{v}</text>
      ))}
      {[0, 100, 200, 300, 400, 500].map((v) => (
        <text key={v} x="745" y={yRight(v) + 4}>{v}</text>
      ))}
      {GROUPS.map((group) => (
        <g key={group.name} textAnchor="middle">
          {CATEGORIES.map((c, i) => (
            <text key={c} x={group.labels[i]} y="686">{c}</text>
          ))}
          <text x={group.mid} y="704">{group.name}</text>
        </g>
      ))}
      <g textAnchor="middle">
        <text transform="translate(119 466) rotate(-90)">C</text>
        <text transform="translate(780 467) rotate(-90)">E</text>
      </g>
      {GROUPS.map((group, g) => (
        <polyline
          key={group.name}
          points={group.line.map((v, i) => group.x - 13.5 + i * 67.5 + "," + (yRight(v) - 0.5)).join(" ")}
          fill="none"
          stroke={["#404040", "#e02020", "#0070f0"][g]}
        />
      ))}
      {GROUPS.map((group, g) =>
        group.line.map((v, i) => {
          const x = group.x - 13.5 + i * 67.5;
          const y = yRight(v);
          if (g === 0) return <rect key={g + "-" + i} x={x - 4.5} y={y - 5} width="8" height="8" />;
          if (g === 1) return <circle key={g + "-" + i} cx={x} cy={y - 1} r="4.500" fill="#f00" stroke="#a00" strokeWidth="0.500" />;
          return <path key={g + "-" + i} d={"M" + x + " " + (y - 6) + "l5.500 10h-11z"} fill="#0f0" />;
        }),
      )}
      <g>
        <path d="M679.500 264.500h42v60h-42z" fill="none" stroke="#000" shapeRendering="crispEdges" />
        <text x="680" y="277">B</text>
        {CATEGORIES.map((c, i) => (
          <g key={c}>
            <rect x="681.500" y={280.500 + i * 14.500} width="25" height="13" fill={FILLS[i]} stroke={EDGES[i]} shapeRendering="crispEdges" />
            <text x="713" y={291 + i * 14.500}>{c}</text>
          </g>
        ))}
      </g>
      <path d="M322 481L304 516L310 519L289 523L294 499L298 504z" fill="#f5302c" />
      <text x="327" y="484" fill="#ee2a2f" className="font-['Noto_Sans_CJK_SC',sans-serif] text-lg font-bold">双击柱形</text>
    </svg>
  );
}

function GraphWindow() {
  return (
    <section className="flex min-h-0 flex-1 flex-col rounded-t-md border border-[#5f6a7c] bg-[#5889d3] px-[9px] pb-[9px]">
      <div className="flex h-9 shrink-0 items-end gap-[19px]">
        <div className="flex items-center gap-1 pb-0.5">
          <svg width="20" height="20" viewBox="0 0 20 20" shapeRendering="crispEdges" aria-hidden="true">
            <path d="M1 1h19v19H1z" fill="#333" /><path d="M0 0h18v18H0z" fill="#e2c9bf" />
            <path d="M3 2h13v6H3zM3 10h13v5H3z" fill="#35d8d8" />
            <path d="M3 6h4l3-2h6M3 14l4-1 3-2h6" stroke="#123" fill="none" />
            <path d="M1.500 1v17M1 16.500h16" stroke="#d0352c" strokeDasharray="2 1" />
          </svg>
          <h2 className="text-[15px]">Graph1 *</h2>
        </div>
        <span className="flex-1" />
        {[
          ["Minimize graph", "M1 7.500h14"],
          ["Maximize graph", "M3.500 4.500h9v8h-9z"],
          ["Close graph", "M2 2l12 12M14 2L2 14"],
        ].map(([label, d]) => (
          <button key={label} type="button" aria-label={label} className="flex h-9 w-[26px] items-center justify-center">
            <svg width="16" height="16" viewBox="0 0 16 16" fill="none" stroke="#000" strokeWidth="3"><path d={d} /></svg>
          </button>
        ))}
      </div>
      <div className="relative flex min-h-0 flex-1 border-t border-l border-r border-b border-[#777] border-r-white border-b-white">
        <div className="min-w-0 flex-1 bg-white"><Chart /></div>
        <div className="w-[59px] shrink-0 bg-[#c0c0c0]" />
        <div className="absolute top-0 left-0 flex text-xl leading-none font-bold">
          <button type="button" className="h-6 w-[25px] border border-[#aaa] bg-[#6699cc] font-['Liberation_Sans',sans-serif] text-white">1</button>
          <button type="button" className="h-6 w-[25px] border border-l-0 border-[#aaa] bg-white font-['Liberation_Sans',sans-serif] text-[#444]">2</button>
        </div>
        <button type="button" aria-label="Speed mode lock" className="absolute top-[27px] left-1">
          <svg width="17" height="19" viewBox="0 0 17 19" aria-hidden="true">
            <rect x=".5" y=".5" width="16" height="18" rx="3" fill="#bdbdbd" stroke="#888" />
            <path d="M5 9V5q0-2 3.500-2T12 5v4" stroke="#000" strokeWidth="2" fill="none" />
            <path d="M2.500 8.500h12v9h-12z" fill="#33c66b" stroke="#000" />
            <path d="M6 10v6l6-3z" />
          </svg>
        </button>
      </div>
    </section>
  );
}

function Workspace() {
  return (
    <main className="flex min-w-0 flex-1 flex-col">
      <div className="relative flex min-h-0 flex-1 border-t-2 border-l-2 border-r-2 border-b-2 border-[#727272] border-r-[#eee] border-b-[#eee] bg-[#ababab] pt-3.5 pr-[29px] pb-[42px] pl-[11px]">
        <GraphWindow />
        <a href="#feedback" className="absolute right-[11px] bottom-[9px] text-[21px] text-[#0a64c8] underline">&gt;&gt;反馈</a>
      </div>
      <div className="flex gap-px bg-[#eaecfb] pt-px">
        <Bar items="plotLine> plotDots> plotLineDots> plotBars> plotDouble> plotBox> plotArea> plotPolar> plotStock> plotTemplates" />
        <Bar items="cubeBars> | cubeFlat> cubeDice> gridFill> waveGrid> square" />
        <Bar items="maskA maskB | mask maskGray maskRed | maskBlack" />
        <Bar items="rotateL rotateR tiltL tiltR bell" more className="flex-1" />
      </div>
    </main>
  );
}

function RightDock() {
  return (
    <aside className="flex w-[41px] shrink-0 flex-col gap-0.5 bg-[#ebedfc] pt-0.5 pl-0.5">
      <SideBar className="w-[26px]" items="layers axesRed axesX axesY swapXY runGraph* | layoutOne layoutTwo layoutFour arrange | cornerL cornerTop cornerRight cornerAll inset insetData" />
      <SideBar className="w-[34px] flex-1" more items="alignLeft alignRight | alignTop alignBottom | centerV centerH | distributeV distributeH |" />
    </aside>
  );
}

function PanelHeader({ title, children }: { title: string; children?: React.ReactNode }) {
  return (
    <div className="flex h-[30px] shrink-0 items-center bg-linear-to-b from-[#c0d0e0] to-[#d8e4f1] pr-[3px] pl-1">
      <h2 className="flex-1 text-base whitespace-nowrap">{title}</h2>
      {children}
      <button type="button" aria-label={title + " menu"} className="flex w-[17px] justify-center">
        <svg width="9" height="5" viewBox="0 0 9 5"><path d="M0 0h9L4.500 5z" /></svg>
      </button>
      <button type="button" aria-label={"Pin " + title} className="flex w-[17px] justify-center">
        <svg width="9" height="10" viewBox="0 0 9 10" shapeRendering="crispEdges" fill="none" stroke="#000"><path d="M2.500.500h4v5h-4zM5.500.500v5M1 6.500h7M4.500 7v3" /></svg>
      </button>
      <button type="button" aria-label={"Close " + title} className="flex w-4 justify-center">
        <svg width="9" height="9" viewBox="0 0 9 9" stroke="#000" strokeWidth="1.500"><path d="M.500.500l8 8M8.500.500l-8 8" /></svg>
      </button>
    </div>
  );
}

function Chevron({ up = false }: { up?: boolean }) {
  return (
    <svg width="11" height="8" viewBox="0 0 11 8" fill="none" stroke="#505050" strokeWidth="2" aria-hidden="true">
      <path d={up ? "M1 7l4.500-5L10 7" : "M1 1l4.500 5L10 1"} />
    </svg>
  );
}

function TreeRow({ id, indent, expander = true, children }: { id: string; indent: string; expander?: boolean; children: React.ReactNode }) {
  return (
    <li className={"flex h-[22px] shrink-0 items-center " + indent}>
      {expander && (
        <button type="button" aria-label={"Collapse " + id} className="mr-[3px] flex h-[11px] w-[11px] items-center justify-center border border-[#8c8c8c] bg-[#f2f2f2]">
          <span className="h-0.5 w-[7px] bg-[#2a4fa8]" />
        </button>
      )}
      <span className="mr-1 grid h-[17px] w-[17px] place-items-center">
        <input id={id} type="checkbox" defaultChecked className="peer col-start-1 row-start-1 h-[17px] w-[17px] appearance-none border border-[#333] bg-white" />
        <svg width="12" height="10" viewBox="0 0 12 10" fill="none" stroke="#333" strokeWidth="1.500" className="pointer-events-none invisible col-start-1 row-start-1 peer-checked:visible">
          <path d="M1 5l3 4 7-8" />
        </svg>
      </span>
      <label htmlFor={id} className="flex items-center">{children}</label>
    </li>
  );
}

function ObjectManager() {
  return (
    <section className="flex flex-col">
      <PanelHeader title="对象管理器">
        <button type="button" aria-label="Plots" className="mr-1">
          <svg width="17" height="16" viewBox="0 0 17 16" fill="none" shapeRendering="crispEdges">
            <path d="M1.500 1v13.500H16" stroke="#000" /><path d="M3 10l6-6 6 6" stroke="#000" /><path d="M3 3l4 3 3 4 5-5M3 8l3 2" stroke="#f00" strokeWidth="2" />
          </svg>
        </button>
        <button type="button" aria-label="Add" className="mr-1">
          <svg width="17" height="16" viewBox="0 0 17 16" fill="none">
            <path d="M1 1h15v10h-2v4l-4-4H1z" stroke="#1e78e0" strokeWidth="1.500" /><path d="M8.500 2v8M4 6h9" stroke="#f00" strokeWidth="2" />
          </svg>
        </button>
      </PanelHeader>
      <div className="relative flex h-[88px] overflow-hidden border-2 border-[#686868] bg-white text-sm">
        <svg width="60" height="84" viewBox="0 0 60 84" className="pointer-events-none absolute top-0 left-0" fill="none" stroke="#999" strokeDasharray="1 2" shapeRendering="crispEdges" aria-hidden="true">
          <path d="M9.500 0v55.500H20M10 11.500h9M25.500 17v16.500H36M25.500 61v16.500H35" />
        </svg>
        <ul className="relative flex flex-1 flex-col">
          <TreeRow id="layer1" indent="pl-[19px]">Layer1</TreeRow>
          <TreeRow id="plotC" indent="pl-[49px]" expander={false}>
            <span className="mr-1 h-[15px] w-[42px] border border-[#a58362] bg-[#fdc896]" />
            <b className="text-base">C</b>
          </TreeRow>
          <TreeRow id="rightY" indent="pl-[19px]">RightY</TreeRow>
          <TreeRow id="g1" indent="pl-[35px]">g1</TreeRow>
        </ul>
        <div className="mr-0.5 flex w-[19px] flex-col items-center justify-between bg-[#f0f0f0] py-1.5">
          <Chevron up />
          <span className="mb-3 h-[21px] w-full bg-[#cdcdcd]" />
          <Chevron />
        </div>
      </div>
    </section>
  );
}

const APPS: { name: string; icon: React.ReactNode }[] = [
  {
    name: "添加App",
    icon: (
      <>
        <path d="M1 1h34v33H1z" fill="#fff" stroke="#6fb3dc" /><path d="M0 0h36v5H0z" fill="#1184cc" />
        <path d="M4 7h11v16H4z" fill="#c4c4c4" /><path d="M18 8h6M26 7h8v4h-8zM18 12h15v11H18zM4 26h6v3H4zM13 27h8M4 31h6M13 31h6" stroke="#c4c4c4" fill="none" />
        <circle cx="28" cy="28" r="11.500" fill="#44c832" stroke="#36a828" /><path d="M28 21v14M21 28h14" stroke="#fff" strokeWidth="4.500" />
      </>
    ),
  },
  {
    name: "Theme Preview",
    icon: (
      <>
        <path d="M1 1h38v38H1z" fill="#ffe9c2" />
        <path d="M2 23l5-10 3 5 3-3 3-10 4 12 5-4 3-3 4 7 3-3 3 9z" fill="#f23a3a" /><path d="M2 24.500h36" stroke="#f23a3a" strokeWidth="2" />
        <circle cx="21" cy="23" r="7.500" fill="#ee5a52" stroke="#2c2433" strokeWidth="3.500" /><path d="M27 29l7 7" stroke="#2c2433" strokeWidth="4" />
      </>
    ),
  },
  {
    name: "Stats Advisor",
    icon: (
      <>
        <path d="M20 20l19 19" stroke="#434a54" strokeWidth="2.500" />
        <path d="M18 1l2 10 9 3-8 5-1 10-7-7-10 1 5-9-5-9 10 2z" fill="#edc93f" stroke="#d6ae2c" />
        <path d="M27 2v6M24 5h6M3 26v6M0 29h6" stroke="#edc93f" strokeWidth="1.500" />
      </>
    ),
  },
  {
    name: "Speedy Fit",
    icon: (
      <>
        <path d="M1 1h38v38H1z" fill="#26457d" />
        <path d="M11 8h12l-7 24H2l9-4-5-2 7-2-5-2 6-2-4-2 6-3-4-2 5-2-3-2z" fill="#e3ebf5" /><path d="M1 11h10M1 16h9M1 21h8" stroke="#486ba6" />
        <path d="M25 9h13l-2 5h-7l-1 5h7l-2 4h-6l-3 9h-6z" fill="#9dcbf4" />
      </>
    ),
  },
  {
    name: "Simple Fit",
    icon: (
      <>
        <path d="M0 0h40v40H0z" fill="#0864c8" />
        <path d="M3.500 38V5M2 37.500h32" stroke="#bcd9ff" strokeWidth="2" /><path d="M0 9l3.500-8L7 9zM32 34l7 3-7 3z" fill="#fff" />
        <path d="M5 35q15-1 20-6t10-23" fill="none" stroke="#ef0a8e" strokeWidth="3" />
        <path d="M8 32h3v3H8zM15 31h3v3h-3zM22 29h3v3h-3zM27 22h3v3h-3zM32 15h3v3h-3zM34 4h3v3h-3z" fill="#fff" />
      </>
    ),
  },
  {
    name: "",
    icon: (
      <>
        <path d="M18 6h18v28H18z" fill="#fff" stroke="#0b5a9c" strokeWidth="2" /><path d="M22 10h11M22 14h11M22 18h11" stroke="#0b5a9c" strokeWidth="2" />
        <path d="M9 6l16-3v33L9 33z" fill="#0b5a9c" /><path d="M12 11l2 9 3-8 3 8 2-9" fill="none" stroke="#fff" strokeWidth="2" />
      </>
    ),
  },
];

const TABS: [string, string, string, string][] = [
  ["所有", "h-14 font-bold", "0 0 27 56", "M27 0L1 13V44L27 56"],
  ["连接器", "-mt-1.5 h-16", "0 0 27 64", "M15 0L1 7V50L27 64"],
  ["统计", "-mt-1.5 h-[50px]", "0 0 27 50", "M15 0L1 7V36L27 50"],
];

function AppsPanel() {
  return (
    <section className="flex min-h-0 flex-1 flex-col">
      <PanelHeader title="Apps" />
      <div className="flex min-h-0 flex-1 bg-[#f0f0f0]">
        <div className="flex w-[31px] shrink-0 flex-col items-end">
          <div className="flex h-[68px] w-full flex-col items-center justify-around pt-1 pb-1">
            {["M0 0h7v1H0zM0 6l3.500-4L7 6z", "M0 6l3.500-4L7 6z", "M0 1h7L3.500 5z", "M0 1h7L3.500 5zM0 6h7v1H0z"].map((d) => (
              <button key={d} type="button" aria-label="Scroll tabs"><svg width="7" height="7" viewBox="0 0 7 7"><path d={d} /></svg></button>
            ))}
          </div>
          {TABS.map(([label, cls, box, d]) => (
            <button key={label} type="button" className={"relative flex w-[27px] shrink-0 items-center justify-center text-[15px] " + cls}>
              <svg viewBox={box} fill="none" stroke="#7a7a7a" className="absolute inset-0 h-full w-full" aria-hidden="true"><path d={d} fill={label === "所有" ? "#fff" : "#f0f0f0"} /></svg>
              <span className="relative leading-none [text-orientation:sideways] [writing-mode:vertical-rl]">{label}</span>
            </button>
          ))}
        </div>
        <ul className="flex flex-1 flex-col overflow-hidden border-t border-l border-b border-[#777] bg-white pt-[5px]">
          {APPS.map((app) => (
            <li key={app.name} className="h-[94px] w-[94px] shrink-0">
              <button type="button" className="flex w-full flex-col items-center text-base leading-5" aria-label={app.name || "Word"}>
                <svg width="40" height="40" viewBox="0 0 40 40" aria-hidden="true">{app.icon}</svg>
                <span className="mt-[3px] max-w-[84px] text-center">{app.name}</span>
              </button>
            </li>
          ))}
        </ul>
        <div className="mr-[3px] flex w-5 shrink-0 flex-col items-center border-r border-[#999] bg-[#f0f0f0] pt-[9px] pb-[9px]">
          <Chevron up />
          <span className="mt-[6px] h-[211px] w-full bg-[#cdcdcd]" />
          <span className="flex-1" />
          <Chevron />
        </div>
      </div>
    </section>
  );
}

function StatusBar() {
  return (
    <footer className="relative flex h-[29px] shrink-0 items-stretch justify-end border-t border-b border-[#d5d5d5] border-b-[#6e6e6e] bg-[#f0f0f0] py-0.5 text-[15px] leading-6 whitespace-nowrap">
      <span className="w-6 border-l border-[#cfcfcf] text-center">--</span>
      <span className="w-[5px] border-l border-[#cfcfcf]" />
      <span className="w-[60px] border-l border-[#cfcfcf] pl-1">AU : <span className="text-[17px]">开</span></span>
      <span className="w-[87px] border-l border-[#cfcfcf] pl-1">Light Grids</span>
      <span className="w-[224px] border-l border-[#cfcfcf] pl-[5px]">1:[Book1]<span className="text-[17px]">输出数据</span>!Col(C)[1:9]</span>
      <span className="w-[137px] border-l border-[#cfcfcf] pl-[5px]">17KB - [Graph1]1!</span>
      <span className="w-[45px] border-l border-[#cfcfcf] pl-1 text-[17px]">弧度</span>
      <span className="flex w-6 items-end justify-end border-l border-[#cfcfcf] pr-1 pb-0.5">
        <svg width="11" height="11" viewBox="0 0 11 11" fill="#bbb" aria-hidden="true">
          <path d="M8 0h3v3H8zM4 4h3v3H4zM8 4h3v3H8zM0 8h3v3H0zM4 8h3v3H4zM8 8h3v3H8z" />
        </svg>
      </span>
      <span className="absolute right-5 top-0 font-['Liberation_Serif',serif] text-base leading-6 text-[#e8403c]">zhanshaoyi.com</span>
    </footer>
  );
}

export default function App() {
  return (
    <div className="relative flex h-screen flex-col overflow-hidden bg-[#ebedfc] font-['Noto_Sans','Noto_Sans_CJK_SC',sans-serif] text-black">
      <TitleBar />
      <MenuArea />
      <TopToolbars />
      <div className="flex min-h-0 flex-1 pt-px">
        <LeftDock />
        <Workspace />
        <RightDock />
        <div className="flex w-[193px] shrink-0 flex-col gap-1.5 bg-[#eef0fb] pt-px">
          <ObjectManager />
          <AppsPanel />
        </div>
      </div>
      <StatusBar />
      <div className="pointer-events-none absolute top-[126px] left-[231px] text-[#ee1c24]">
        <div className="flex w-[168px] justify-between font-['Noto_Sans_CJK_SC',sans-serif] text-2xl leading-[26px] font-bold">
          {Array.from("我爱分享网").map((ch) => <span key={ch}>{ch}</span>)}
        </div>
        <div className="font-['Liberation_Serif',serif] text-lg leading-8 font-bold">www.zhanshaoyi.com</div>
      </div>
      <button type="button" aria-label="Recent search" className="absolute bottom-0.5 left-[3px]">
        <svg width="44" height="42" viewBox="0 0 44 42" fill="none" aria-hidden="true">
          <path d="M2 5h31v34H2z" fill="#cfdff5" stroke="#1e78e0" strokeWidth="2" />
          <path d="M12 5q1-4 5-4t5 4z" fill="#1469d2" />
          <path d="M10.500 14.500A9 9 0 1 1 9 23" stroke="#ee4440" strokeWidth="2" />
          <path d="M9 11v6h6" stroke="#ee4440" strokeWidth="2" />
          <path d="M18 14v7l4 4" stroke="#ee4440" strokeWidth="2" />
          <circle cx="33" cy="32" r="9" fill="#1469d2" />
          <circle cx="32" cy="31" r="4" stroke="#fff" strokeWidth="2" /><path d="M35 34l4 4" stroke="#fff" strokeWidth="2.500" />
        </svg>
      </button>
    </div>
  );
}
